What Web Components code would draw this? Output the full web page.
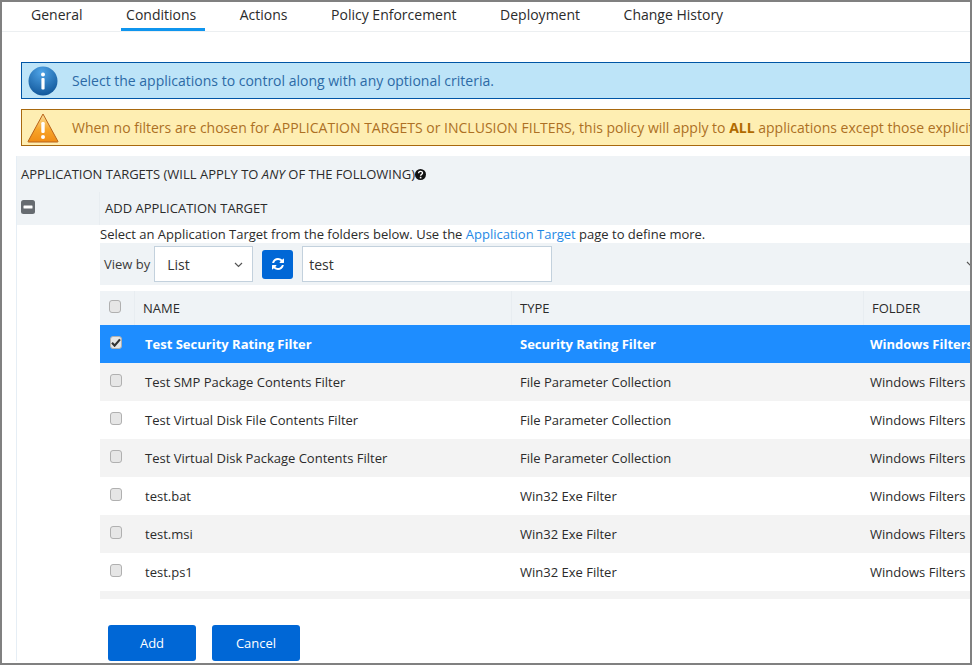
<!DOCTYPE html>
<html lang="en"><head><meta charset="utf-8"><title>Conditions</title>
<style>
html,body{margin:0;padding:0;height:100%;background:#fff;overflow:hidden}
body{font-family:"Open Sans","Liberation Sans",sans-serif;font-size:13px;color:#2b2b2b}
</style></head><body>
<policy-page></policy-page>
<script>
function el(name,css,html){
  const C=class extends HTMLElement{constructor(){super();this.attachShadow({mode:'open'}).innerHTML='<style>'+css+'</style>'+html;}};
  customElements.define(name,C);
}
const check='<svg width="10" height="9" viewBox="0 0 10 9"><path d="M1 4.8 3.6 7.6 9 1.4" fill="none" stroke="#333" stroke-width="2.2"/></svg>';
el('tab-bar',`:host{display:flex;box-sizing:border-box;height:30px;padding-left:24px;gap:29.55px;border-bottom:1px solid #eceff1;flex:none}`,`<slot></slot>`);
el('tab-item',`:host{display:block;box-sizing:border-box;height:27px;padding:0 9px 0 5px;font-size:14px;line-height:25px;color:#2b2b2b;white-space:nowrap;margin-bottom:-1px}
:host([active]){height:29px;border-bottom:3px solid #0f95ee}`,`<slot></slot>`);
el('alert-box',`:host{display:flex;align-items:center;box-sizing:border-box;height:37px;margin-left:19px;width:1000px;border:1px solid;font-size:14px;white-space:nowrap;padding-left:5px;flex:none}
:host([kind=info]){background:#bde4f8;border-color:#0055a5;color:#2c6aa6}
:host([kind=warn]){background:#feeeb2;border-color:#a8690f;color:#ad7024}
.i{width:32px;height:32px;flex:none;display:flex;align-items:center;justify-content:center;margin-right:13px}`,`<span class="i"><slot name="icon"></slot></span><span><slot></slot></span>`);
el('check-box',`:host{display:flex;align-items:center;justify-content:center;box-sizing:border-box;width:12px;height:13px;border:1px solid #b0b0b0;border-radius:3px;background:#e6e6e6}`,`<slot></slot>`);
el('table-row',`:host{display:grid;grid-template-columns:34px 377px 352px 300px;height:38px;align-items:center;background:#fff;color:#2b2b2b;white-space:nowrap;font-size:13px;flex:none}
:host([alt]){background:#f3f3f3}
:host([sel]){background:#1e8dff;color:#fff;font-weight:700}
:host([head]){height:34px;background:#eff3f6;font-size:13px}
.c{display:block;line-height:38px;height:100%;box-sizing:border-box}
.n{padding-left:11px}.t{padding-left:9px}.f{padding-left:7px}
:host([head]) .c{line-height:34px;border-left:1px solid #e8edf1}
:host([head]) .n{padding-left:8px}
:host([head]) .t{padding-left:8px}
:host([head]) .f{padding-left:8px}
.b{padding-left:10px;display:flex;align-items:center;margin-top:-3px}
:host([head]) .b{border-left:0;padding-left:9px;margin-top:-4px}
:host([sel]) .b{margin-top:-4px}`,
`<span class="c b"><slot name="box"></slot></span><span class="c n"><slot name="a"></slot></span><span class="c t"><slot name="b"></slot></span><span class="c f"><slot name="d"></slot></span>`);
el('action-button',`:host{display:flex;align-items:center;justify-content:center;box-sizing:border-box;width:88px;height:36px;background:#0067d6;color:#fff;border-radius:3px;font-size:13px}`,`<slot></slot>`);
el('tool-bar',`:host{display:flex;align-items:center;height:42px;background:#eff3f6;padding-left:4px;white-space:nowrap;font-size:13px;color:#3a3a3a;position:relative;flex:none}
.sel{display:flex;align-items:center;justify-content:space-between;box-sizing:border-box;width:99px;height:36px;border:1px solid #c3d1dd;background:#fff;margin-left:4px;padding:0 9px 0 12px;font-size:14px;color:#333}
.sel svg{margin-top:1px}
.btn{display:flex;align-items:center;justify-content:center;width:31px;height:29px;background:#0067d6;border-radius:3px;margin-left:9px}
.inp{display:flex;align-items:center;box-sizing:border-box;width:250px;height:36px;border:1px solid #c3d1dd;background:#fff;margin-left:9px;padding-left:6px;font-size:14px;color:#333}
.far{position:absolute;left:866px;top:18px}`,
`<span>View by</span><span class="sel">List<svg width="9" height="6" viewBox="0 0 9 6"><path d="M1 1l3.5 3.5L8 1" fill="none" stroke="#555" stroke-width="1.2"/></svg></span>
<span class="btn"><svg width="14" height="14" viewBox="0 0 1792 1792"><path fill="#fff" d="M1639 1056q0 5-1 7-64 268-268 434.5t-478 166.5q-146 0-282.5-55t-243.5-157l-129 129q-19 19-45 19t-45-19-19-45v-448q0-26 19-45t45-19h448q26 0 45 19t19 45-19 45l-137 137q71 66 161 102t187 36q134 0 250-65t186-179q11-17 53-117 8-23 30-23h192q13 0 22.5 9.5t9.5 22.5zm25-800v448q0 26-19 45t-45 19h-448q-26 0-45-19t-19-45 19-45l138-138q-148-137-349-137-134 0-250 65t-186 179q-11 17-53 117-8 23-30 23h-199q-13 0-22.5-9.5t-9.5-22.5v-7q65-268 270-434.5t480-166.5q146 0 284 55.5t245 156.5l130-129q19-19 45-19t45 19 19 45z"/></svg></span>
<span class="inp">test</span>
<svg class="far" width="9" height="6" viewBox="0 0 9 6"><path d="M1 1l3.5 3.5L8 1" fill="none" stroke="#555" stroke-width="1.2"/></svg>`);
el('target-section',`:host{display:block;margin:10px 0 0 14px;border-left:1px solid #e6eef5;flex:none}
.head{background:#eff3f6;height:69px;box-sizing:border-box}
.t{height:36px;line-height:36px;padding-left:4px;font-size:13px;color:#2b2b2b;white-space:nowrap;display:flex;align-items:center}
.add{display:flex;height:33px;align-items:center}
.m{width:83px;box-sizing:border-box;padding:0 0 0 4px;height:100%;display:flex;align-items:center;border-right:1px solid #e8edf1}
.m svg{margin-top:-3px}
.a{padding-left:5px;font-size:13px;margin-top:-1px;white-space:nowrap}
.body{margin-left:83px;display:flex;flex-direction:column}
.desc{height:18px;line-height:18px;white-space:nowrap;font-size:13px;color:#2b2b2b}
.desc a{color:#1e88e5;text-decoration:none}
.tbl{margin-top:6px;display:flex;flex-direction:column}
.end{height:8px;background:#f3f3f3}
.btns{display:flex;gap:16px;margin:26px 0 0 8px}
i{font-style:italic}`,
`<div class="head"><div class="t"><span>APPLICATION TARGETS (WILL APPLY TO <i>ANY</i> OF THE FOLLOWING)</span>
<svg width="11" height="11" viewBox="0 0 11 11"><circle cx="5.5" cy="5.5" r="5.5" fill="#111"/><path d="M3.6 4.2c0-2.4 3.9-2.4 3.9-.2 0 1.4-1.9 1.4-1.9 2.8" fill="none" stroke="#fff" stroke-width="1.4"/><rect x="4.8" y="7.8" width="1.6" height="1.6" fill="#fff"/></svg></div>
<div class="add"><span class="m"><svg width="14" height="14" viewBox="0 0 14 14"><rect width="14" height="14" rx="2.5" fill="#666b70"/><rect x="2.5" y="5.5" width="9" height="3" rx=".5" fill="#fff"/></svg></span><span class="a">ADD APPLICATION TARGET</span></div></div>
<div class="body"><div class="desc">Select an Application Target from the folders below. Use the <a>Application Target</a> page to define more.</div>
<tool-bar></tool-bar>
<div class="tbl">
<table-row head><check-box slot="box"></check-box><span slot="a">NAME</span><span slot="b">TYPE</span><span slot="d">FOLDER</span></table-row>
<table-row sel><check-box slot="box">${check}</check-box><span slot="a">Test Security Rating Filter</span><span slot="b">Security Rating Filter</span><span slot="d">Windows Filters</span></table-row>
<table-row alt><check-box slot="box"></check-box><span slot="a">Test SMP Package Contents Filter</span><span slot="b">File Parameter Collection</span><span slot="d">Windows Filters</span></table-row>
<table-row><check-box slot="box"></check-box><span slot="a">Test Virtual Disk File Contents Filter</span><span slot="b">File Parameter Collection</span><span slot="d">Windows Filters</span></table-row>
<table-row alt><check-box slot="box"></check-box><span slot="a">Test Virtual Disk Package Contents Filter</span><span slot="b">File Parameter Collection</span><span slot="d">Windows Filters</span></table-row>
<table-row><check-box slot="box"></check-box><span slot="a">test.bat</span><span slot="b">Win32 Exe Filter</span><span slot="d">Windows Filters</span></table-row>
<table-row alt><check-box slot="box"></check-box><span slot="a">test.msi</span><span slot="b">Win32 Exe Filter</span><span slot="d">Windows Filters</span></table-row>
<table-row><check-box slot="box"></check-box><span slot="a">test.ps1</span><span slot="b">Win32 Exe Filter</span><span slot="d">Windows Filters</span></table-row>
<div class="end"></div></div>
<div class="btns"><action-button>Add</action-button><action-button>Cancel</action-button></div>
</div>`);
el('policy-page',`:host{display:flex;flex-direction:column;box-sizing:border-box;width:972px;height:665px;border:2px solid #808080;overflow:hidden;background:#fff}
.gap1{height:30px;flex:none}.gap2{height:10px;flex:none}`,
`<tab-bar><tab-item>General</tab-item><tab-item active>Conditions</tab-item><tab-item>Actions</tab-item><tab-item>Policy Enforcement</tab-item><tab-item>Deployment</tab-item><tab-item>Change History</tab-item></tab-bar>
<div class="gap1"></div>
<alert-box kind="info"><svg slot="icon" width="30" height="30" viewBox="0 0 30 30"><defs><radialGradient id="g" cx=".45" cy=".2" r=".9"><stop offset="0" stop-color="#4ea3e6"/><stop offset="1" stop-color="#0b4f92"/></radialGradient></defs><circle cx="15" cy="15" r="14.5" fill="url(#g)"/><circle cx="15" cy="8.5" r="2" fill="#fff"/><rect x="13.4" y="12" width="3.2" height="11.5" rx="1" fill="#fff"/></svg>Select the applications to control along with any optional criteria.</alert-box>
<div class="gap2"></div>
<alert-box kind="warn"><svg slot="icon" width="32" height="30" viewBox="0 0 32 30"><defs><linearGradient id="w" x1="0" y1="0" x2="0" y2="1"><stop offset="0" stop-color="#fbe3a0"/><stop offset=".55" stop-color="#f7a52a"/><stop offset="1" stop-color="#f08c14"/></linearGradient></defs><path d="M16 1 31 28.5a.5.5 0 0 1-.4.5H1.4a.5.5 0 0 1-.4-.5Z" fill="url(#w)" stroke="#b8631a"/><rect x="14.3" y="9" width="3.4" height="11" rx="1.2" fill="#fff"/><circle cx="16" cy="24" r="2" fill="#fff"/></svg>When no filters are chosen for APPLICATION TARGETS or INCLUSION FILTERS, this policy will apply to <b style="color:#b06a00">ALL</b> applications except those explicitly excluded.</alert-box>
<target-section></target-section>`);
</script>
</body></html>
